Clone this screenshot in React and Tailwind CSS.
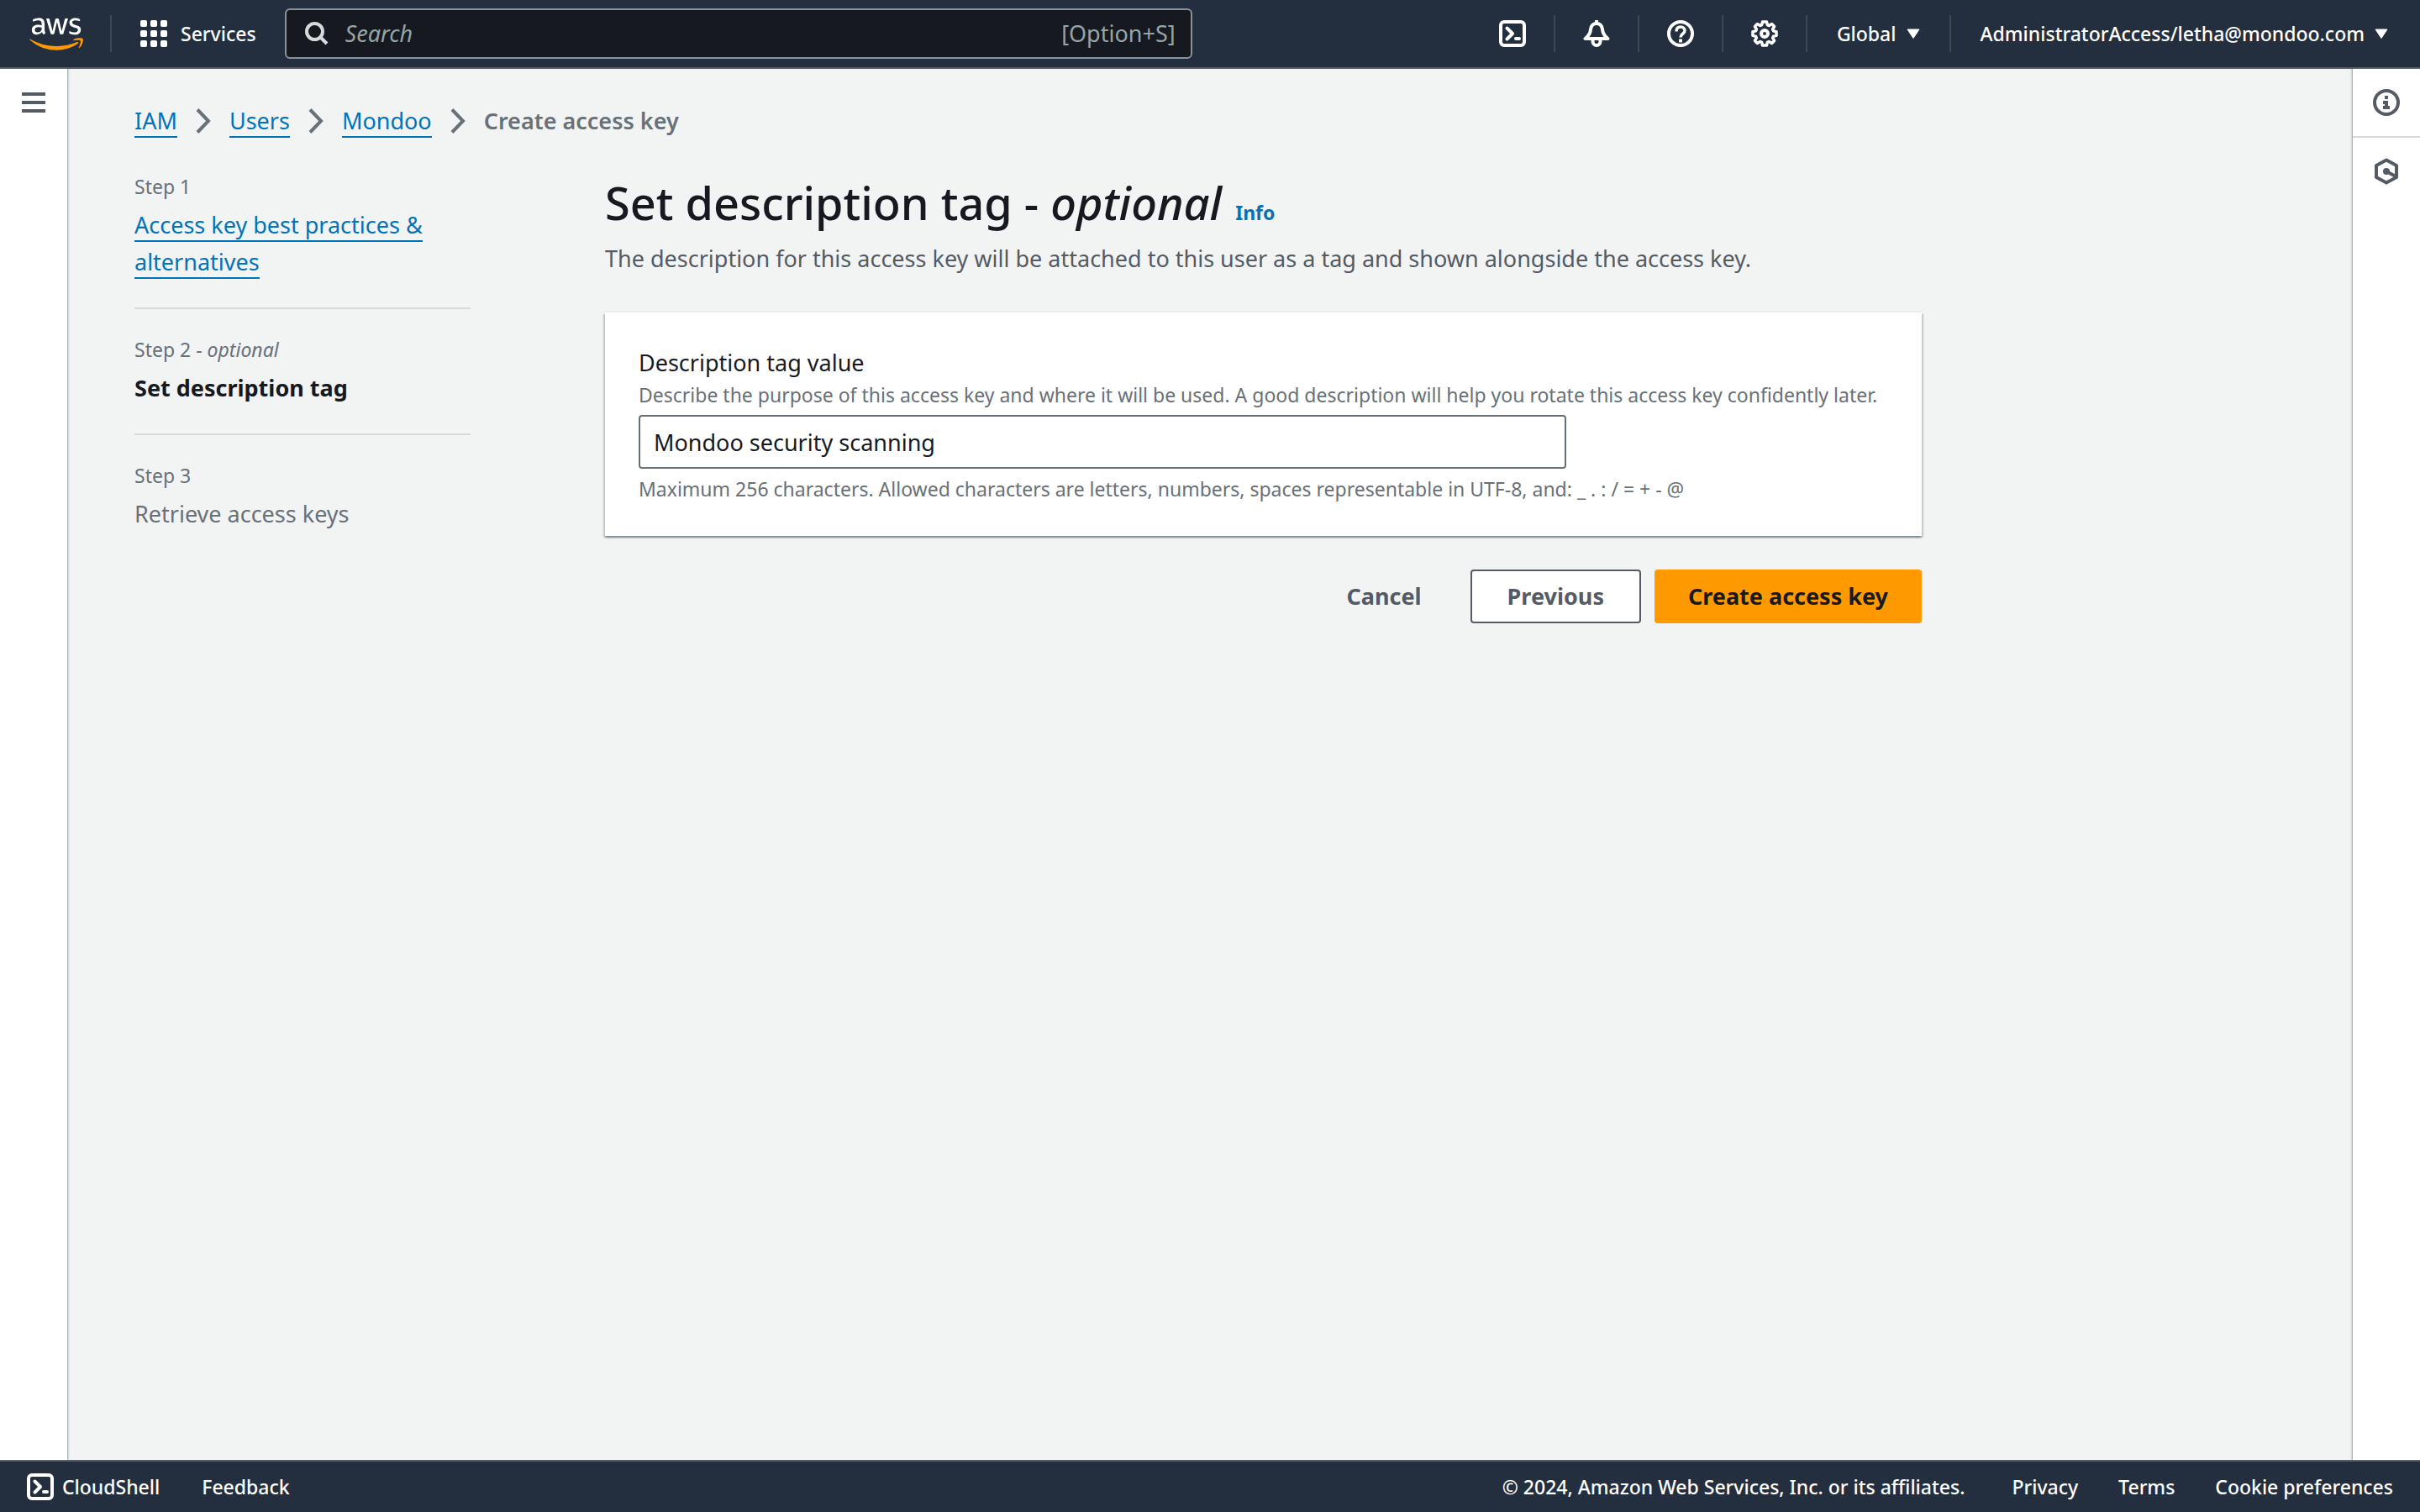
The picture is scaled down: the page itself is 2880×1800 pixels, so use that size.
import { FaAws } from "react-icons/fa";

function CloudShellIcon() {
  return (
    <svg viewBox="0 0 32 32" className="size-8" fill="none" stroke="currentColor" strokeWidth="4" aria-hidden="true">
      <rect x="2" y="2" width="28" height="28" rx="4" />
      <path d="M9.5 9.500 16 16l-6.500 6.500" strokeLinecap="round" strokeLinejoin="round" />
      <path d="M20 22h4" strokeLinecap="round" />
    </svg>
  );
}

function BellIcon() {
  return (
    <svg viewBox="0 0 32 32" className="size-8" fill="none" stroke="currentColor" strokeWidth="4" strokeLinejoin="round" aria-hidden="true">
      <path d="M16 0v4" />
      <path d="M16 4c-4.500 0-6.500 3-7 7-.500 5-2.500 8-6.500 11h27c-4-3-6-6-6.500-11-.500-4-2.500-7-7-7z" />
      <path d="M11.500 23v2.500a4.500 4.500 0 0 0 9 0V23" />
    </svg>
  );
}

function HelpIcon() {
  return (
    <svg viewBox="0 0 32 32" className="size-8" fill="none" stroke="currentColor" aria-hidden="true">
      <circle cx="16" cy="16" r="14" strokeWidth="4" />
      <path d="M11 13.500c0-3.500 2-5.500 5-5.500s5 1.800 5 4.500c0 4-5 3.500-5 8" strokeWidth="3.500" />
      <path d="M14 22.500h4v4h-4z" fill="currentColor" stroke="none" />
    </svg>
  );
}

function GearIcon() {
  return (
    <svg viewBox="0 0 32 32" className="size-8" fill="none" stroke="currentColor" aria-hidden="true">
      <path
        d="M13.500 2h5l.8 3.700 2 .9 3.300-2 3 3-2 3.200.9 2.100 3.500.700v4.800l-3.500.800-.9 2 2 3.300-3 3-3.300-2-2 .9-.8 3.600h-5l-.8-3.600-2-.9-3.300 2-3-3 2-3.300-.9-2L2 18.400v-4.800l3.500-.700.900-2.100-2-3.200 3-3 3.300 2 2-.9z"
        strokeWidth="3.500"
        strokeLinejoin="round"
      />
      <circle cx="16" cy="16" r="4" strokeWidth="4" />
    </svg>
  );
}

function Caret() {
  return (
    <svg viewBox="0 0 16 12" className="h-3 w-4" fill="currentColor" stroke="currentColor" aria-hidden="true">
      <path d="M1 1h14L8 11.500z" strokeLinejoin="round" />
    </svg>
  );
}

function Chevron() {
  return (
    <svg viewBox="0 0 18 30" className="mx-[22px] h-[30px] w-[18px] text-[#687078]" fill="none" stroke="currentColor" strokeWidth="4" aria-hidden="true">
      <path d="M2 1.500 15 15 2 28.500" />
    </svg>
  );
}

function TopBar() {
  const tools = [
    ["CloudShell", CloudShellIcon],
    ["Notifications", BellIcon],
    ["Help", HelpIcon],
    ["Settings", GearIcon],
  ];
  return (
    <header className="flex h-[82px] shrink-0 items-center border-b-2 border-[#545b64] bg-[#232f3e] text-[23px] font-medium text-white">
      <a href="#" aria-label="AWS home" className="ml-[35px] grid shrink-0">
        <FaAws className="col-start-1 row-start-1 h-[51px] w-16 [clip-path:inset(0_0_43%_0)]" />
        <FaAws className="col-start-1 row-start-1 h-[51px] w-16 text-[#ff9900] [clip-path:inset(57%_0_0_0)]" />
      </a>
      <div className="ml-8 h-11 w-0.5 shrink-0 bg-[#414750]" />
      <button type="button" className="ml-[34px] flex items-center gap-4">
        <svg viewBox="0 0 32 32" className="size-8" fill="currentColor" aria-hidden="true">
          {[0, 12, 24].map((y) => [0, 12, 24].map((x) => <rect key={x + "-" + y} x={x} y={y} width="8" height="8" rx="2" />))}
        </svg>
        Services
      </button>
      <label className="ml-[34px] flex h-[60px] w-[1080px] items-center rounded-md border-2 border-[#879596] bg-[#16191f] pr-[18px] pl-[22px] text-[27px] font-normal text-[#95a5a6]">
        <svg viewBox="0 0 28 28" className="size-7 shrink-0 text-[#d5dbdb]" fill="none" stroke="currentColor" strokeWidth="4" aria-label="Search">
          <circle cx="11.500" cy="11.500" r="9.500" />
          <path d="m18 18 8 8" />
        </svg>
        <input type="search" placeholder="Search" className="ml-5 min-w-0 flex-1 bg-transparent italic outline-none placeholder:text-[#95a5a6]" />
        <span>[Option+S]</span>
      </label>
      <nav aria-label="Account" className="ml-auto flex items-center">
        {tools.map(([name, Icon]) => (
          <button key={name} type="button" aria-label={name} className="flex h-11 w-[100px] items-center justify-center border-r-2 border-[#414750]">
            <Icon />
          </button>
        ))}
        <button type="button" className="flex h-11 items-center gap-3 border-r-2 border-[#414750] px-[35px]">
          Global <Caret />
        </button>
        <button type="button" className="flex h-11 items-center gap-3 pr-[38px] pl-[35px]">
          AdministratorAccess/letha@mondoo.com <Caret />
        </button>
      </nav>
    </header>
  );
}

function Breadcrumbs() {
  return (
    <nav aria-label="Breadcrumbs" className="flex items-center leading-[44px]">
      {["IAM", "Users", "Mondoo"].map((name) => (
        <div key={name} className="flex items-center">
          <span>
            <a href="#" className="border-b-2 border-[#0073bb] text-[#0073bb]">{name}</a>
          </span>
          <Chevron />
        </div>
      ))}
      <span className="font-semibold text-[#687078]">Create access key</span>
    </nav>
  );
}

function StepLabel({ children }) {
  return <div className="mb-1 text-[23px] leading-[40px] text-[#687078]">{children}</div>;
}

function Steps() {
  return (
    <ol className="leading-[44px] text-[#687078]">
      <li className="border-b-2 border-[#d5dbdb] pb-8">
        <StepLabel>Step 1</StepLabel>
        <a href="#" className="border-b-2 border-[#0073bb] text-[#0073bb]">Access key best practices &amp; alternatives</a>
      </li>
      <li className="border-b-2 border-[#d5dbdb] pt-7 pb-8">
        <StepLabel>Step 2 - <em>optional</em></StepLabel>
        <div className="font-bold text-[#16191f]">Set description tag</div>
      </li>
      <li className="pt-7">
        <StepLabel>Step 3</StepLabel>
        <div>Retrieve access keys</div>
      </li>
    </ol>
  );
}

function TagForm() {
  return (
    <form>
      <h1 className="text-[54px] leading-[78px] font-medium">
        Set description tag - <em>optional</em>
        <a href="#" className="ml-4 text-[23px] leading-none font-bold text-[#0073bb]">Info</a>
      </h1>
      <p className="mt-1.5 leading-[44px] text-[#545b64]">
        The description for this access key will be attached to this user as a tag and shown alongside the access key.
      </p>
      <section className="mt-[42px] bg-white px-10 pt-[38px] pb-10 shadow-[0_-2px_0_0_#eaeded,0_2px_2px_0_rgba(0,28,36,0.3),2px_2px_2px_0_rgba(0,28,36,0.15),-2px_2px_2px_0_rgba(0,28,36,0.15)]">
        <label htmlFor="tag-value" className="block leading-[44px]">Description tag value</label>
        <p id="tag-description" className="text-[23px] leading-[32px] text-[#687078]">
          Describe the purpose of this access key and where it will be used. A good description will help you rotate this access key confidently later.
        </p>
        <input
          id="tag-value"
          type="text"
          aria-describedby="tag-description tag-constraint"
          defaultValue="Mondoo security scanning"
          className="mt-2 block h-16 w-[1104px] max-w-full rounded-sm border-2 border-[#687078] bg-white px-4"
        />
        <p id="tag-constraint" className="mt-2 text-[23px] leading-[32px] text-[#687078]">
          Maximum 256 characters. Allowed characters are letters, numbers, spaces representable in UTF-8, and: _ . : / = + - @
        </p>
      </section>
      <div className="mt-10 flex justify-end gap-4 font-bold text-[#545b64]">
        <button type="button" className="h-16 px-[42px]">Cancel</button>
        <button type="button" className="h-16 rounded-sm border-2 border-[#545b64] bg-white px-[42px]">Previous</button>
        <button type="submit" className="h-16 rounded-sm bg-[#ff9900] px-10 text-[#16191f]">Create access key</button>
      </div>
    </form>
  );
}

function InfoRail() {
  return (
    <aside className="z-10 w-20 shrink-0 bg-white text-[#545b64] shadow-[-1px_0_1px_0_#aab7b8,-2px_0_2px_0_rgba(0,28,36,0.12)]">
      <button type="button" aria-label="Help panel" className="flex h-[82px] w-full items-center justify-center border-b-2 border-[#d5dbdb]">
        <svg viewBox="0 0 32 32" className="size-8" fill="none" stroke="currentColor" aria-hidden="true">
          <circle cx="16" cy="16" r="14" strokeWidth="4" />
          <path d="M14 8h4v4h-4zM12 14h6v6h2v4h-8v-4h2v-2h-2z" fill="currentColor" stroke="none" />
        </svg>
      </button>
      <button type="button" aria-label="Tutorials" className="flex h-20 w-full items-center justify-center">
        <svg viewBox="0 0 32 32" className="size-8" fill="none" stroke="currentColor" strokeWidth="4" strokeLinejoin="round" aria-hidden="true">
          <path d="M16 2.500 28 9v14l-12 6.500L4 23V9z" />
          <path d="m16 16 11 6" />
          <circle cx="16" cy="16" r="4" fill="currentColor" stroke="none" />
        </svg>
      </button>
    </aside>
  );
}

function Footer() {
  return (
    <footer className="flex h-[62px] shrink-0 items-center border-t-2 border-[#545b64] bg-[#232f3e] px-8 text-[23px] font-medium text-white">
      <button type="button" className="flex items-center gap-2.5">
        <CloudShellIcon />
        CloudShell
      </button>
      <a href="#" className="ml-[50px]">Feedback</a>
      <span className="ml-auto">© 2024, Amazon Web Services, Inc. or its affiliates.</span>
      <nav aria-label="Legal" className="ml-14 flex gap-12">
        <a href="#">Privacy</a>
        <a href="#">Terms</a>
        <a href="#">Cookie preferences</a>
      </nav>
    </footer>
  );
}

export default function App() {
  return (
    <div className="flex min-h-screen flex-col bg-[#f2f3f3] font-['Noto_Sans','Open_Sans',sans-serif] text-[27px] text-[#16191f]">
      <TopBar />
      <div className="flex flex-1">
        <aside className="z-10 w-20 shrink-0 bg-white shadow-[1px_0_1px_0_#aab7b8,2px_0_2px_0_rgba(0,28,36,0.12)]">
          <button type="button" aria-label="Open navigation" className="flex h-20 w-full items-center justify-center text-[#545b64]">
            <svg viewBox="0 0 28 24" className="h-6 w-7" fill="currentColor" aria-hidden="true">
              <path d="M0 0h28v4H0zM0 10h28v4H0zM0 20h28v4H0z" />
            </svg>
          </button>
        </aside>
        <main className="min-w-0 flex-1 px-20 pt-10 pb-20">
          <Breadcrumbs />
          <div className="mt-9 grid max-w-[2127px] grid-cols-[400px_minmax(0,1fr)] gap-40">
            <Steps />
            <TagForm />
          </div>
        </main>
        <InfoRail />
      </div>
      <Footer />
    </div>
  );
}
